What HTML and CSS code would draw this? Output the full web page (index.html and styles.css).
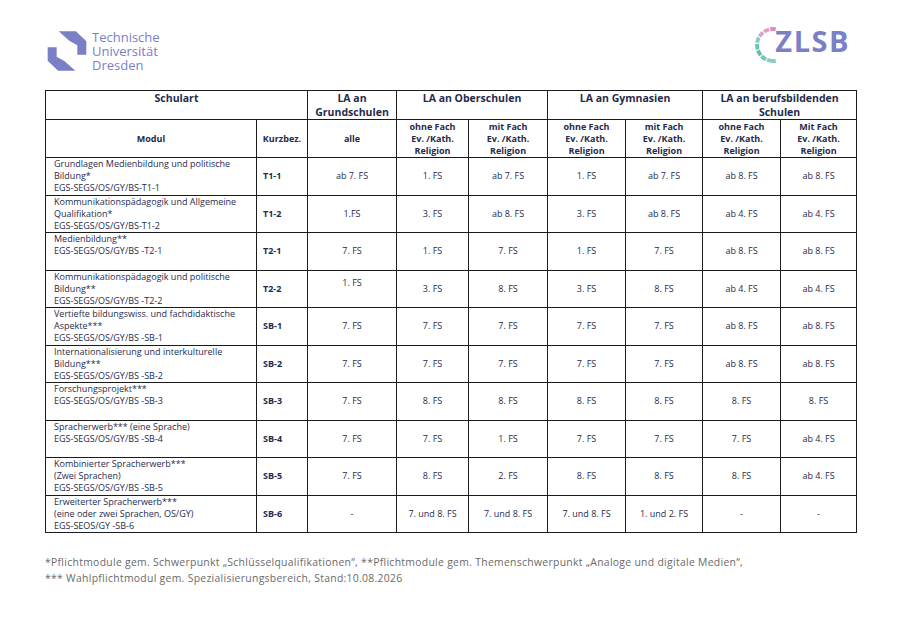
FILE: index.html
```html
<!DOCTYPE html>
<html lang="de">
<head>
<meta charset="utf-8">
<title>Modulübersicht</title>
<link rel="stylesheet" href="styles.css">
</head>
<body>
<div class="page">
  <header class="top">
    <div class="tud">
      <svg class="tud-icon" width="46" height="46" viewBox="0 0 138 138" aria-hidden="true">
        <polygon points="44,10 96,10 127,40 127,80 100,80 100,52 76,38" fill="#7b80c6"/>
        <polygon points="94,128 42,128 11,98 11,58 38,58 38,86 62,100" fill="#7b80c6"/>
      </svg>
      <div class="tud-name">Technische<br>Universität<br>Dresden</div>
    </div>
    <div class="zlsb">
      <svg class="zlsb-arc" width="40" height="40" viewBox="0 0 40 40" aria-hidden="true">
        <path d="M22.78 4.24 A16 16 0 0 0 17.22 4.24" stroke="#e48ab8"/>
        <path d="M16.13 4.48 A16 16 0 0 0 11.05 6.74" stroke="#e89cc4"/>
        <path d="M10.15 7.39 A16 16 0 0 0 6.43 11.52" stroke="#cfa5d4"/>
        <path d="M5.87 12.49 A16 16 0 0 0 4.16 17.77" stroke="#86cec2"/>
        <path d="M4.04 18.88 A16 16 0 0 0 4.62 24.41" stroke="#6cc6b4"/>
        <path d="M4.96 25.47 A16 16 0 0 0 7.74 30.28" stroke="#62c0a4"/>
        <path d="M8.49 31.12 A16 16 0 0 0 12.99 34.38" stroke="#6fc8b3"/>
        <path d="M14.01 34.84 A16 16 0 0 0 22.78 35.76" stroke="#86d0c3"/>
      </svg>
      <span class="zlsb-text">ZLSB</span>
    </div>
  </header>

  <table class="grid">
    <colgroup>
      <col class="c-mod"><col class="c-kurz"><col class="c-alle">
      <col class="c-os1"><col class="c-os2"><col class="c-gy1"><col class="c-gy2">
      <col class="c-bs1"><col class="c-bs2">
    </colgroup>
    <thead>
      <tr class="h1">
        <th colspan="2">Schulart</th>
        <th>LA an<br>Grundschulen</th>
        <th colspan="2">LA an Oberschulen</th>
        <th colspan="2">LA an Gymnasien</th>
        <th colspan="2">LA an berufsbildenden<br>Schulen</th>
      </tr>
      <tr class="h2">
        <th>Modul</th>
        <th>Kurzbez.</th>
        <th>alle</th>
        <th>ohne Fach<br>Ev. /Kath.<br>Religion</th>
        <th>mit Fach<br>Ev. /Kath.<br>Religion</th>
        <th>ohne Fach<br>Ev. /Kath.<br>Religion</th>
        <th>mit Fach<br>Ev. /Kath.<br>Religion</th>
        <th>ohne Fach<br>Ev. /Kath.<br>Religion</th>
        <th>Mit Fach<br>Ev. /Kath.<br>Religion</th>
      </tr>
    </thead>
    <tbody>
      <tr>
        <td class="mod">Grundlagen Medienbildung und politische<br>Bildung*<br>EGS-SEGS/OS/GY/BS-T1-1</td>
        <td class="kurz">T1-1</td>
        <td>ab 7. FS</td><td>1. FS</td><td>ab 7. FS</td><td>1. FS</td><td>ab 7. FS</td><td>ab 8. FS</td><td>ab 8. FS</td>
      </tr>
      <tr>
        <td class="mod">Kommunikationspädagogik und Allgemeine<br>Qualifikation*<br>EGS-SEGS/OS/GY/BS-T1-2</td>
        <td class="kurz">T1-2</td>
        <td>1.FS</td><td>3. FS</td><td>ab 8. FS</td><td>3. FS</td><td>ab 8. FS</td><td>ab 4. FS</td><td>ab 4. FS</td>
      </tr>
      <tr>
        <td class="mod">Medienbildung**<br>EGS-SEGS/OS/GY/BS -T2-1</td>
        <td class="kurz">T2-1</td>
        <td>7. FS</td><td>1. FS</td><td>7. FS</td><td>1. FS</td><td>7. FS</td><td>ab 8. FS</td><td>ab 8. FS</td>
      </tr>
      <tr>
        <td class="mod">Kommunikationspädagogik und politische<br>Bildung**<br>EGS-SEGS/OS/GY/BS -T2-2</td>
        <td class="kurz">T2-2</td>
        <td>1. FS<br>&nbsp;</td><td>3. FS</td><td>8. FS</td><td>3. FS</td><td>8. FS</td><td>ab 4. FS</td><td>ab 4. FS</td>
      </tr>
      <tr>
        <td class="mod">Vertiefte bildungswiss. und fachdidaktische<br>Aspekte***<br>EGS-SEGS/OS/GY/BS -SB-1</td>
        <td class="kurz">SB-1</td>
        <td>7. FS</td><td>7. FS</td><td>7. FS</td><td>7. FS</td><td>7. FS</td><td>ab 8. FS</td><td>ab 8. FS</td>
      </tr>
      <tr>
        <td class="mod">Internationalisierung und interkulturelle<br>Bildung***<br>EGS-SEGS/OS/GY/BS -SB-2</td>
        <td class="kurz">SB-2</td>
        <td>7. FS</td><td>7. FS</td><td>7. FS</td><td>7. FS</td><td>7. FS</td><td>ab 8. FS</td><td>ab 8. FS</td>
      </tr>
      <tr>
        <td class="mod">Forschungsprojekt***<br>EGS-SEGS/OS/GY/BS -SB-3</td>
        <td class="kurz">SB-3</td>
        <td>7. FS</td><td>8. FS</td><td>8. FS</td><td>8. FS</td><td>8. FS</td><td>8. FS</td><td>8. FS</td>
      </tr>
      <tr>
        <td class="mod">Spracherwerb*** (eine Sprache)<br>EGS-SEGS/OS/GY/BS -SB-4</td>
        <td class="kurz">SB-4</td>
        <td>7. FS</td><td>7. FS</td><td>1. FS</td><td>7. FS</td><td>7. FS</td><td>7. FS</td><td>ab 4. FS</td>
      </tr>
      <tr>
        <td class="mod">Kombinierter Spracherwerb***<br>(Zwei Sprachen)<br>EGS-SEGS/OS/GY/BS -SB-5</td>
        <td class="kurz">SB-5</td>
        <td>7. FS</td><td>8. FS</td><td>2. FS</td><td>8. FS</td><td>8. FS</td><td>8. FS</td><td>ab 4. FS</td>
      </tr>
      <tr>
        <td class="mod">Erweiterter Spracherwerb***<br>(eine oder zwei Sprachen, OS/GY)<br>EGS-SEOS/GY -SB-6</td>
        <td class="kurz">SB-6</td>
        <td>-</td><td>7. und 8. FS</td><td>7. und 8. FS</td><td>7. und 8. FS</td><td>1. und 2. FS</td><td>-</td><td>-</td>
      </tr>
    </tbody>
  </table>

  <p class="notes">*Pflichtmodule gem. Schwerpunkt „Schlüsselqualifikationen“, **Pflichtmodule gem. Themenschwerpunkt „Analoge und digitale Medien“,<br>*** Wahlpflichtmodul gem. Spezialisierungsbereich, Stand:10.08.2026</p>
</div>
</body>
</html>
```

FILE: styles.css
```css
* { box-sizing: border-box; }

html, body {
  margin: 0;
  padding: 0;
  background: #ffffff;
}

body {
  font-family: "Open Sans", "DejaVu Sans", sans-serif;
  color: #1f2c4c;
}

.page {
  width: 900px;
  height: 631px;
  padding: 28px 44px 0 45px;
}

/* ---------- header ---------- */
.top {
  height: 62px;
  display: flex;
  justify-content: space-between;
  align-items: flex-start;
}

.tud {
  display: flex;
  align-items: flex-start;
  margin-left: -1px;
}

.tud-icon {
  display: block;
  flex: none;
}

.tud-name {
  margin-left: 2px;
  margin-top: 2px;
  font-size: 13px;
  line-height: 14px;
  color: #7b80c6;
}

.zlsb {
  position: relative;
  margin-right: 6px;
  margin-top: -3px;
  padding-left: 20px;
  height: 40px;
}

.zlsb-arc {
  position: absolute;
  left: -2px;
  top: 0;
  fill: none;
  stroke-width: 3.8;
}

.zlsb-text {
  display: block;
  margin-top: 1px;
  font-size: 29px;
  line-height: 29px;
  font-weight: 700;
  letter-spacing: 1.5px;
  color: #7b7fc6;
}

/* ---------- table ---------- */
.grid {
  width: 811px;
  table-layout: fixed;
  border-collapse: collapse;
  border: 1.5px solid #1b1b1b;
}

.c-mod { width: 211px; }
.c-kurz { width: 51px; }
.c-alle { width: 89px; }
.c-os1 { width: 72px; }
.c-os2 { width: 79px; }
.c-gy1 { width: 78px; }
.c-gy2 { width: 77px; }
.c-bs1 { width: 78px; }
.c-bs2 { width: 76px; }

.grid th,
.grid td {
  border: 1px solid #1b1b1b;
  padding: 0 2px;
  text-align: center;
  vertical-align: middle;
}

.grid .h1 th {
  height: 28px;
  font-size: 10.5px;
  line-height: 14px;
  font-weight: 700;
  vertical-align: top;
  padding-top: 0;
}

.grid .h2 th {
  height: 38px;
  font-size: 9px;
  line-height: 12px;
  font-weight: 700;
  border-bottom-width: 1.5px;
}

.grid td {
  height: 37.5px;
  font-size: 9px;
  line-height: 12px;
}

.grid td.mod {
  text-align: left;
  vertical-align: top;
  padding: 0 2px 0 8px;
}

.grid td.kurz {
  text-align: left;
  font-weight: 700;
  padding-left: 6px;
}

/* ---------- notes ---------- */
.notes {
  margin: 21px 0 0 0;
  font-size: 10.4px;
  line-height: 16px;
  letter-spacing: 0.3px;
  color: #6a6a6a;
}
```
